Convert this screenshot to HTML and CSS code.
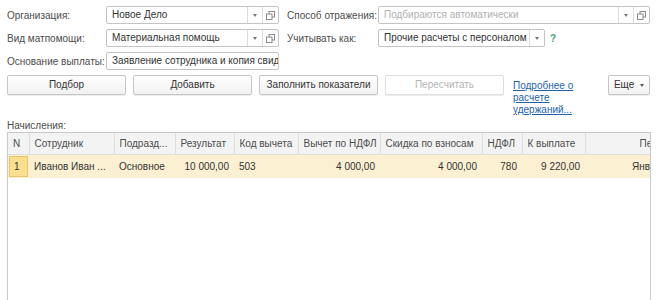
FILE: index.html
```html
<!DOCTYPE html>
<html lang="ru">
<head>
    <meta charset="UTF-8" />
    <title>Материальная помощь</title>
    <link rel="stylesheet" href="styles.css">
</head>
<body>
    <div id="page">
        <div class="row">
            <span class="lbl lbl-a">Организация:</span>
            <div class="field f-a">
                <span class="val">Новое Дело</span>
                <span class="fbtn"><i class="tri"></i></span>
                <span class="fbtn open"><svg width="9" height="9" viewBox="0 0 9 9"><rect x="3" y="0.5" width="5.5" height="5.5" fill="none" stroke="#8a8a8a"/><rect x="0.5" y="3" width="5.5" height="5.5" fill="#fff" stroke="#8a8a8a"/></svg></span>
            </div>
            <span class="lbl lbl-b">Способ отражения:</span>
            <div class="field f-wide">
                <span class="val ph">Подбираются автоматически</span>
                <span class="fbtn"><i class="tri"></i></span>
                <span class="fbtn open"><svg width="9" height="9" viewBox="0 0 9 9"><rect x="3" y="0.5" width="5.5" height="5.5" fill="none" stroke="#8a8a8a"/><rect x="0.5" y="3" width="5.5" height="5.5" fill="#fff" stroke="#8a8a8a"/></svg></span>
            </div>
        </div>
        <div class="row">
            <span class="lbl lbl-a">Вид матпомощи:</span>
            <div class="field f-a">
                <span class="val">Материальная помощь</span>
                <span class="fbtn"><i class="tri"></i></span>
                <span class="fbtn open"><svg width="9" height="9" viewBox="0 0 9 9"><rect x="3" y="0.5" width="5.5" height="5.5" fill="none" stroke="#8a8a8a"/><rect x="0.5" y="3" width="5.5" height="5.5" fill="#fff" stroke="#8a8a8a"/></svg></span>
            </div>
            <span class="lbl lbl-b">Учитывать как:</span>
            <div class="field f-mid">
                <span class="val">Прочие расчеты с персоналом</span>
                <span class="fbtn"><i class="tri"></i></span>
            </div>
            <span class="help">?</span>
        </div>
        <div class="row">
            <span class="lbl lbl-a">Основание выплаты:</span>
            <div class="field f-a">
                <span class="val">Заявление сотрудника и копия свидетельства</span>
            </div>
        </div>

        <div class="toolbar">
            <a href="javascript:;" class="btn">Подбор</a>
            <a href="javascript:;" class="btn">Добавить</a>
            <a href="javascript:;" class="btn">Заполнить показатели</a>
            <a href="javascript:;" class="btn disabled">Пересчитать</a>
            <a href="javascript:;" class="more-link">Подробнее о расчете удержаний...</a>
            <a href="javascript:;" class="btn btn-more">Еще <i class="tri dark"></i></a>
        </div>

        <div class="caption">Начисления:</div>

        <div class="grid">
            <table>
                <colgroup>
                    <col style="width:21px">
                    <col style="width:85px">
                    <col style="width:61px">
                    <col style="width:59px">
                    <col style="width:64px">
                    <col style="width:82px">
                    <col style="width:102px">
                    <col style="width:40px">
                    <col style="width:63px">
                    <col style="width:120px">
                </colgroup>
                <thead>
                    <tr>
                        <th>N</th>
                        <th>Сотрудник</th>
                        <th>Подразд...</th>
                        <th>Результат</th>
                        <th>Код вычета</th>
                        <th>Вычет по НДФЛ</th>
                        <th>Скидка по взносам</th>
                        <th>НДФЛ</th>
                        <th>К выплате</th>
                        <th class="last">Период</th>
                    </tr>
                </thead>
                <tbody>
                    <tr class="cur">
                        <td class="num"><span>1</span></td>
                        <td>Иванов Иван ...</td>
                        <td>Основное</td>
                        <td class="r">10 000,00</td>
                        <td>503</td>
                        <td class="r">4 000,00</td>
                        <td class="r">4 000,00</td>
                        <td class="r">780</td>
                        <td class="r">9 220,00</td>
                        <td class="last">Январь 2019</td>
                    </tr>
                </tbody>
            </table>
        </div>
    </div>
</body>
</html>
```

FILE: styles.css
```css
body{
    margin: 0;
    background: #fff;
    font-family: "Liberation Sans", Arial, sans-serif;
    font-size: 10px;
    color: #333;
    overflow: hidden;
}
#page{
    padding: 6px 0 0 7px;
    width: 643px;
}
.row{
    display: flex;
    align-items: center;
    height: 18px;
    margin-bottom: 5px;
}
.lbl{
    color: #4d4d4d;
    white-space: nowrap;
}
.lbl-a{
    width: 99px;
}
.lbl-b{
    width: 91px;
    margin-left: 8px;
}
.field{
    display: flex;
    align-items: stretch;
    height: 18px;
    box-sizing: border-box;
    border: 1px solid #c4c4c4;
    border-radius: 2px;
    background: #fff;
    overflow: hidden;
}
.f-a{
    width: 173px;
}
.f-wide{
    width: 272px;
}
.f-mid{
    width: 167px;
}
.val{
    flex: 1;
    padding: 0 5px;
    line-height: 16px;
    white-space: nowrap;
    overflow: hidden;
    color: #333;
}
.val.ph{
    color: #b0b0b0;
}
.fbtn{
    width: 14px;
    border-left: 1px solid #dcdcdc;
    display: flex;
    align-items: center;
    justify-content: center;
}
.fbtn.open{
    width: 15px;
}
.tri{
    display: inline-block;
    width: 0;
    height: 0;
    border-left: 2px solid transparent;
    border-right: 2px solid transparent;
    border-top: 3px solid #777;
}
.tri.dark{
    border-top-color: #555;
    vertical-align: middle;
    margin-left: 3px;
}
.help{
    margin-left: 5px;
    color: #3fa07c;
    font-weight: bold;
}

.toolbar{
    display: flex;
    align-items: flex-start;
    height: 45px;
}
a{
    text-decoration: none;
}
.btn{
    width: 119px;
    height: 20px;
    box-sizing: border-box;
    margin-right: 7px;
    border: 1px solid #c6c6c6;
    border-radius: 2px;
    background: linear-gradient(#fff, #f1f1f1);
    box-shadow: 0 1px 1px rgba(0,0,0,.08);
    color: #333;
    text-align: center;
    line-height: 18px;
}
.btn.disabled{
    color: #b5b5b5;
    border-color: #dedede;
    background: #fff;
}
.more-link{
    width: 62px;
    margin-left: 2px;
    padding-top: 5px;
    line-height: 12px;
    color: #1f5fae;
    text-decoration: underline;
}
.btn-more{
    width: 42px;
    margin: 0 0 0 auto;
}

.caption{
    color: #4d4d4d;
    line-height: 12px;
}
.grid{
    width: 642px;
    height: 180px;
    border: 1px solid #c9c9c9;
    overflow: hidden;
}
table{
    border-collapse: collapse;
    table-layout: fixed;
    width: 697px;
}
th{
    height: 21px;
    padding: 0 5px;
    background: #f3f3f3;
    border-right: 1px solid #dedede;
    border-bottom: 1px solid #dedede;
    color: #4d4d4d;
    font-weight: normal;
    text-align: left;
    white-space: nowrap;
    overflow: hidden;
}
th.last{
    padding-left: 54px;
}
td{
    height: 23px;
    padding: 0 5px;
    white-space: nowrap;
    overflow: hidden;
    color: #333;
}
td.r{
    text-align: right;
}
td.last{
    padding-left: 47px;
}
tr.cur td{
    background: #fcf0d3;
}
tr.cur td.num{
    padding: 0 1px;
}
td.num span{
    display: block;
    height: 19px;
    line-height: 19px;
    padding-left: 4px;
    background: #f9df8e;
    border: 1px solid #e6c56c;
}
```
